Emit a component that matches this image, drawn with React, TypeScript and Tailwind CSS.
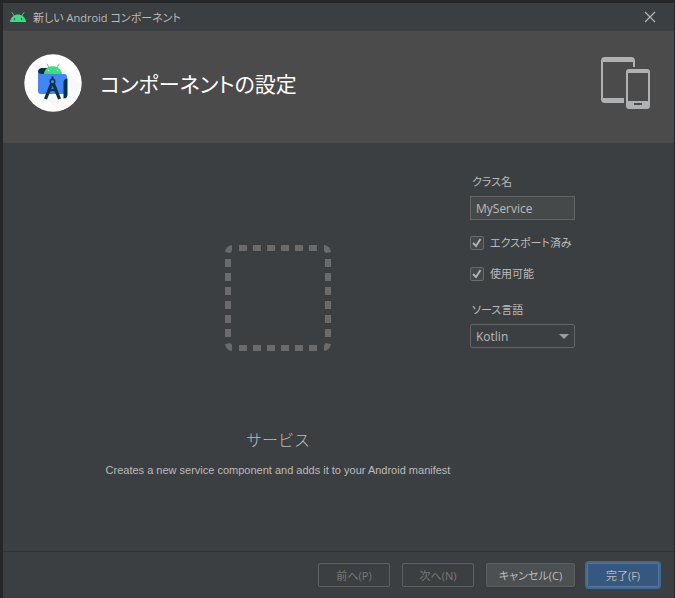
import { useState } from "react";
import type { ReactNode } from "react";

const FONT = "font-['Open_Sans','Noto_Sans_CJK_JP',sans-serif] [font-feature-settings:'palt']";

function AndroidHead() {
  return (
    <svg width="16" height="12" viewBox="0 0 16 12" aria-hidden="true">
      <path d="M2 1.500l2 3M14 1.500l-2 3" stroke="#3ddc84" strokeWidth="0.900" strokeLinecap="round" />
      <path d="M0 11C1 1 15 1 16 11Z" fill="#3ddc84" />
      <circle cx="4.400" cy="8" r="0.800" fill="#2b3a33" />
      <circle cx="11.600" cy="8" r="0.800" fill="#2b3a33" />
    </svg>
  );
}

function StudioLogo() {
  return (
    <svg width="58" height="58" viewBox="0 0 58 58" aria-hidden="true">
      <defs>
        <clipPath id="disc">
          <circle cx="29" cy="29" r="28.500" />
        </clipPath>
        <linearGradient id="shade" x1="0" y1="0" x2="1" y2="1">
          <stop offset="0" stopColor="#efefef" />
          <stop offset="0.700" stopColor="#fcfcfc" />
        </linearGradient>
      </defs>
      <circle cx="29" cy="29" r="28.700" fill="#fff" />
      <path d="M36 10L62 36V62H38L22 44L40 38Z" fill="url(#shade)" clipPath="url(#disc)" />
      <path d="M18 14H24V20H14V17.500Q14.500 14 18 14Z" fill="#073042" />
      <path d="M14 18Q15 20 18 20H40Q43 20 43 23V37Q43 40 40 40H17Q14 40 14 37Z" fill="#4285f4" />
      <path d="M23 10l2.500 4M35 10l-2 4" stroke="#3ddc84" strokeWidth="1" strokeLinecap="round" />
      <path d="M20 20C20.500 9.500 37 9.500 38 20Z" fill="#3ddc84" />
      <circle cx="24.500" cy="16.500" r="0.800" fill="#fff" />
      <circle cx="33.500" cy="16.500" r="0.800" fill="#fff" />
      <path d="M39.500 28Q40 24.500 43.500 24.500V41Q43 44.500 39.500 44.500Z" fill="#073042" />
      <path d="M27.500 30L23.500 40L21.500 45M29.500 30L33.500 40L35.500 45" stroke="#073042" strokeWidth="3.200" fill="none" />
      <path d="M24 37.500Q28.500 34.500 33 37.500" stroke="#073042" strokeWidth="2" fill="none" />
      <path d="M28.500 22.500V26" stroke="#073042" strokeWidth="2" />
      <circle cx="28.500" cy="27.500" r="2.300" fill="#4285f4" stroke="#073042" strokeWidth="1.400" />
    </svg>
  );
}

function Devices() {
  return (
    <svg width="50" height="52" viewBox="0 0 50 52" aria-hidden="true" fill="#afb1b3">
      <path fillRule="evenodd" d="M4 0H30Q34 0 34 4V10H32V5H2V41H23V46H4Q0 46 0 42V4Q0 0 4 0Z" />
      <path
        fillRule="evenodd"
        d="M28 12H46Q49 12 49 15V49Q49 52 46 52H28Q25 52 25 49V15Q25 12 28 12ZM27 16V44H47V16ZM33 46V48H41V46Z"
      />
    </svg>
  );
}

function DashedBox() {
  const steps = [14, 28, 42, 56, 70, 84];
  return (
    <svg width="106" height="106" viewBox="0 0 106 106" aria-hidden="true" fill="#6b6b6b">
      {steps.map((s) => (
        <g key={s}>
          <rect x={s} y="0" width="8" height="6" />
          <rect x={s} y="100" width="8" height="6" />
          <rect x="0" y={s} width="6" height="8" />
          <rect x="100" y={s} width="6" height="8" />
        </g>
      ))}
      <path d="M7 0Q1 1 0 7L5 8Q7 7 7 5Z" />
      <path d="M99 0Q105 1 106 7L101 8Q99 7 99 5Z" />
      <path d="M7 106Q1 105 0 99L5 98Q7 99 7 101Z" />
      <path d="M99 106Q105 105 106 99L101 98Q99 99 99 101Z" />
    </svg>
  );
}

function Check({ children }: { children: ReactNode }) {
  const [on, setOn] = useState(true);
  return (
    <label className="flex h-4 items-center gap-1.5 text-[11px] whitespace-nowrap">
      <span className="relative size-3.5 shrink-0">
        <input
          type="checkbox"
          checked={on}
          onChange={(e) => setOn(e.target.checked)}
          className="block size-3.5 appearance-none rounded-xs border border-[#6b6b6b] bg-[#43494a]"
        />
        {on && (
          <svg className="pointer-events-none absolute inset-0" width="14" height="14" viewBox="0 0 14 14" aria-hidden="true">
            <path d="M3 7l3 3 4.500-7" fill="none" stroke="#b4b4b4" strokeWidth="1.900" />
          </svg>
        )}
      </span>
      {children}
    </label>
  );
}

export default function App() {
  const [name, setName] = useState("MyService");
  return (
    <div className={`min-h-screen bg-[#252627] pt-[3px] pr-px pl-[3px] text-xs text-[#bbbbbb] ${FONT}`}>
      <div className="flex min-h-[calc(100vh-3px)] flex-col bg-[#3c3f41]">
        <header className="flex h-7 items-center gap-[7px] pr-[18px] pl-[7px]">
          <AndroidHead />
          <h1 className="flex-1 pt-0.5 text-[11px] leading-4">新しい Android コンポーネント</h1>
          <button type="button" aria-label="閉じる">
            <svg width="12" height="12" viewBox="0 0 12 12" aria-hidden="true">
              <path d="M1 1l10 10M11 1L1 11" stroke="#b4b4b4" strokeWidth="1.200" />
            </svg>
          </button>
        </header>

        <div className="flex h-28 items-center gap-[18px] bg-[#4b4b4b] pr-[23px] pb-2 pl-[21px]">
          <StudioLogo />
          <h2 className="flex-1 pt-0.5 text-[21px] text-white">コンポーネントの設定</h2>
          <Devices />
        </div>

        <main className="flex flex-1 justify-center gap-[19px] pl-[3px]">
          <section className="flex w-[346px] flex-col items-center pt-[102px]">
            <DashedBox />
            <h3 className="mt-[77px] text-base leading-6 font-light [font-feature-settings:normal]">サービス</h3>
            <p className="mt-2.5 font-['Liberation_Sans',sans-serif] text-[11px] leading-4 whitespace-nowrap">
              Creates a new service component and adds it to your Android manifest
            </p>
          </section>
          <form className="flex w-[105px] flex-col pt-[31px]">
            <label htmlFor="class-name" className="pl-0.5 text-[11px] leading-4">
              クラス名
            </label>
            <input
              id="class-name"
              value={name}
              onChange={(e) => setName(e.target.value)}
              className="mt-1.5 h-6 w-full border border-[#646464] bg-[#45494a] px-[5px]"
            />
            <div className="mt-[15px] flex flex-col gap-[15px]">
              <Check>エクスポート済み</Check>
              <Check>使用可能</Check>
            </div>
            <label htmlFor="language" className="mt-5 pl-0.5 text-[11px] leading-4">
              ソース言語
            </label>
            <div className="relative mt-1.5">
              <select
                id="language"
                className="block h-6 w-full appearance-none rounded-xs border border-[#646464] bg-[#3c3f41] px-[5px] pt-0.5"
              >
                <option>Kotlin</option>
                <option>Java</option>
              </select>
              <svg className="pointer-events-none absolute top-2.5 right-1.5" width="10" height="5" viewBox="0 0 10 5" aria-hidden="true">
                <path d="M0 0H10L5 5Z" fill="#9a9da0" />
              </svg>
            </div>
          </form>
        </main>

        <footer className="flex h-[47px] justify-end gap-3 border-t border-[#323232] pt-[11px] pr-[15px] text-[11px]">
          <button type="button" disabled className="h-6 w-[72px] rounded-xs border border-[#5e6060] pt-0.5 text-[#777777]">
            前へ(P)
          </button>
          <button type="button" disabled className="h-6 w-[72px] rounded-xs border border-[#5e6060] pt-0.5 text-[#777777]">
            次へ(N)
          </button>
          <button type="button" className="h-6 w-[89px] rounded-xs border border-[#5e6060] bg-[#4c5052] pt-0.5 shadow-sm">
            キャンセル(C)
          </button>
          <button type="button" className="h-6 w-[72px] rounded-xs border border-[#537699] bg-[#365880] pt-0.5 ring-2 ring-[#43698e]">
            完了(F)
          </button>
        </footer>
      </div>
    </div>
  );
}
